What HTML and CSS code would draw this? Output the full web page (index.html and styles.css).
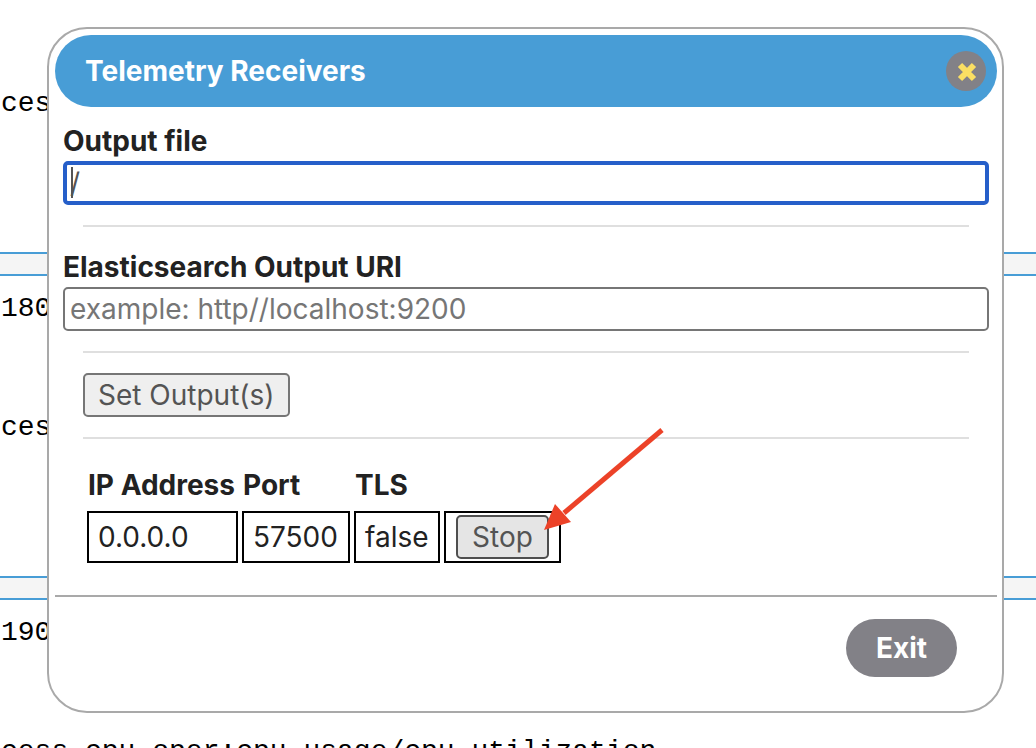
FILE: index.html
```html
<!DOCTYPE html>
<html lang="en">
<head>
<meta charset="utf-8">
<title>Telemetry Receivers</title>
<link rel="stylesheet" href="styles.css">
</head>
<body>
<main class="log">
  <section class="record">
    <p class="record-path">ces</p>
    <div class="record-bar"></div>
    <p class="record-value">180</p>
  </section>
  <section class="record">
    <p class="record-path">ces</p>
    <div class="record-bar"></div>
    <p class="record-value">190</p>
  </section>
  <section class="record">
    <p class="record-path">cess_cpu_oper:cpu_usage/cpu_utilization</p>
  </section>
</main>

<div class="dialog" role="dialog" aria-labelledby="dialog-title">
  <header class="dialog-header">
    <h1 class="dialog-title" id="dialog-title">Telemetry Receivers</h1>
    <button class="close" type="button" aria-label="Close">
      <svg class="close-icon" viewBox="0 0 22 22" aria-hidden="true">
        <path d="M5 5 19 19M19 5 5 19"/>
      </svg>
    </button>
  </header>
  <form class="dialog-body">
    <label class="label" for="output-file">Output file</label>
    <input class="input input-active" id="output-file" type="text" value="/">
    <hr class="rule">
    <label class="label" for="output-uri">Elasticsearch Output URI</label>
    <input class="input" id="output-uri" type="text" placeholder="example: http//localhost:9200">
    <hr class="rule">
    <div class="section">
      <button class="button" type="button">Set Output(s)</button>
    </div>
    <hr class="rule">
    <div class="section">
      <table class="receivers">
        <thead>
          <tr><th class="col-ip">IP Address</th><th class="col-port">Port</th><th class="col-tls">TLS</th><th class="col-action"></th></tr>
        </thead>
        <tbody>
          <tr>
            <td>0.0.0.0</td><td>57500</td><td>false</td>
            <td class="action"><button class="button button-hover" type="button">Stop</button>
              <svg class="arrow" viewBox="0 0 120 104" aria-hidden="true">
                <path class="arrow-line" d="M118 3 20 86"/>
                <path class="arrow-head" d="M0 103 11 77 27 95Z"/>
              </svg>
            </td>
          </tr>
        </tbody>
      </table>
    </div>
  </form>
  <footer class="dialog-footer">
    <button class="exit" type="button">Exit</button>
  </footer>
</div>
</body>
</html>
```
FILE: styles.css
```css
* { box-sizing: border-box; }

body {
  margin: 0;
  position: relative;
  height: 100vh;
  overflow: hidden;
  background: #fff;
  color: #222;
  font: 28px/32px Inter, "Open Sans", sans-serif;
}

button, input { font: inherit; }

/* Log behind the dialog */
.log {
  padding-top: 88px;
  color: #000;
  font-family: "Liberation Mono", monospace;
}
.record { padding-bottom: 87px; }
.record-path, .record-value { margin: 0; padding-left: 1px; white-space: nowrap; }
.record-bar {
  height: 24px;
  margin: 132px 0 17px;
  border: solid #489dd6;
  border-width: 2px 0;
  background: #f5f5f5;
}

/* Dialog */
.dialog {
  position: absolute;
  top: 27px;
  left: 47px;
  right: 32px;
  padding: 6px 5px 6px 6px;
  border: 2px solid #a9a9a9;
  border-radius: 40px;
  background: #fff;
}
.dialog-header {
  display: flex;
  align-items: center;
  justify-content: space-between;
  height: 72px;
  padding: 0 11px 0 30px;
  border-radius: 36px;
  background: #489dd6;
}
.dialog-title {
  margin: 0;
  color: #fff;
  font-size: 28px;
  font-weight: 700;
}
.close {
  display: grid;
  place-items: center;
  width: 40px;
  height: 40px;
  padding: 0;
  border: 0;
  border-radius: 50%;
  background: #828187;
}
.close-icon { width: 22px; height: 22px; }
.close-icon path { stroke: #fadf63; stroke-width: 6; }

.dialog-body { padding: 14px 8px 28px; }
.label {
  display: block;
  font-weight: 700;
  line-height: 40px;
}
.input {
  display: block;
  width: 100%;
  height: 44px;
  padding: 0 5px;
  border: 2px solid #767676;
  border-radius: 5px;
  background: #fff;
  color: #545454;
}
.input::placeholder { color: #767676; opacity: 1; }
.input-active {
  padding: 0 3px;
  border: 4px solid #265fc9;
  outline: 0;
  background: linear-gradient(#545454, #545454) 4px 2px / 2px 31px no-repeat #fff;
}
.rule {
  height: 2px;
  margin: 20px;
  border: 0;
  background: #dfdfdf;
}
.section { padding: 0 20px; }
.button {
  display: block;
  height: 44px;
  padding: 0 13px;
  border: 2px solid #767676;
  border-radius: 5px;
  background: #efefef;
  color: #545454;
}
.button-hover {
  width: 100%;
  border-color: #4f4f4f;
  background: #e5e5e5;
}

.receivers { border-spacing: 4px; }
.receivers th {
  height: 44px;
  padding: 0 1px;
  font-weight: 700;
  text-align: left;
}
.receivers td {
  height: 52px;
  padding: 0 9px;
  border: 2px solid #000;
}
.col-ip { min-width: 151px; }
.col-port { min-width: 108px; }
.col-tls { min-width: 86px; }
.col-action { min-width: 117px; }
.receivers .action { position: relative; padding: 0 10px; }
.arrow {
  position: absolute;
  left: 98px;
  bottom: 30px;
  width: 120px;
  height: 104px;
}
.arrow-line { fill: none; stroke: #ec4228; stroke-width: 5; }
.arrow-head { fill: #ec4228; }

.dialog-footer {
  display: flex;
  justify-content: flex-end;
  padding: 22px 40px 28px;
  border-top: 2px solid #a9a9a9;
}
.exit {
  height: 58px;
  padding: 0 30px;
  border: 0;
  border-radius: 29px;
  background: #828187;
  color: #fff;
  font-weight: 700;
}
```
